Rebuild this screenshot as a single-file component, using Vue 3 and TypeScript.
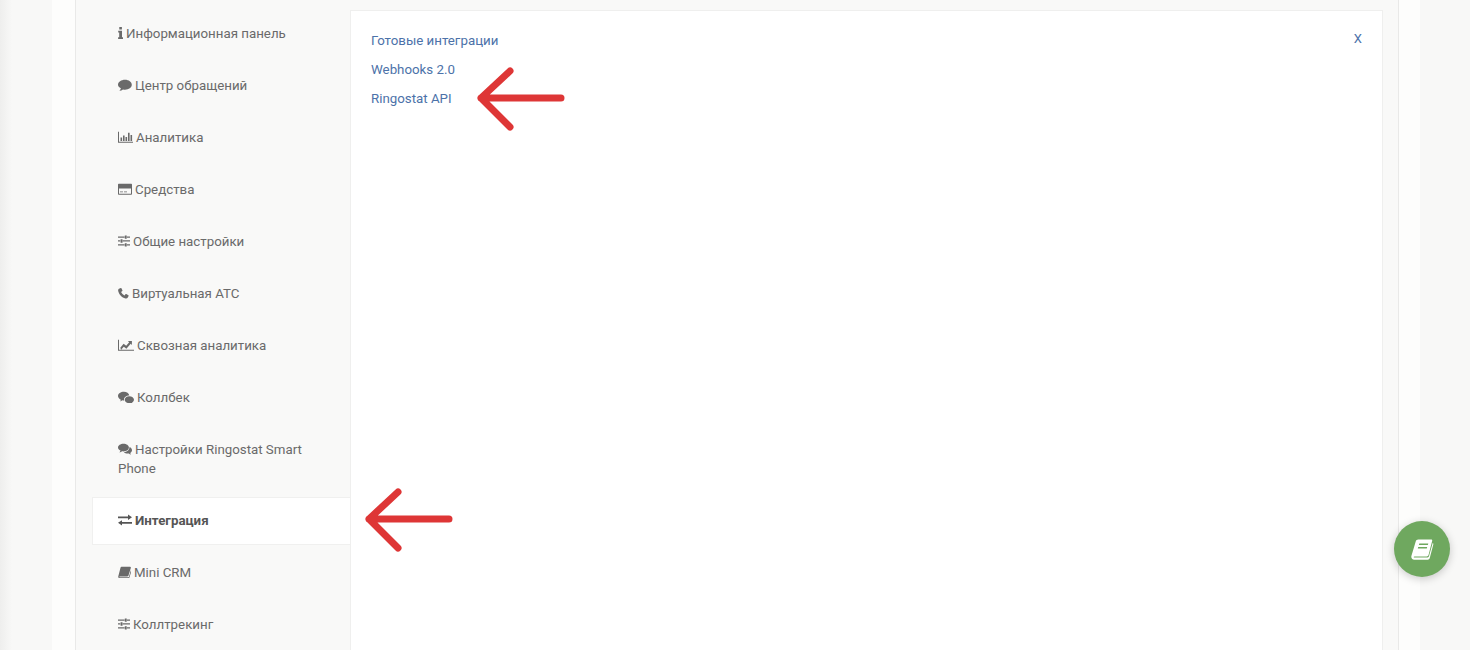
<template>
  <div class="page">
    <div class="edge"></div>
    <div class="wrap">
      <div class="panel">
        <ul class="menu">
          <li v-for="item in items" :key="item.label" class="menu-item" :class="{ active: item.active }">
            <svg class="ico" :style="{ width: item.w + 'px' }" :viewBox="`0 0 ${item.w} 12`" fill="currentColor" v-html="item.icon"></svg>{{ item.label }}
          </li>
        </ul>
        <div class="content">
          <div class="links">
            <a class="link">Готовые интеграции</a>
            <a class="link">Webhooks 2.0</a>
            <a class="link">Ringostat API</a>
          </div>
          <a class="close">X</a>
        </div>
      </div>
    </div>

    <svg class="arrow arrow-top" viewBox="0 0 92 64" fill="none">
      <path d="M88 31H8M37 4 8 31l29 29" />
    </svg>
    <svg class="arrow arrow-side" viewBox="0 0 92 64" fill="none">
      <path d="M88 31H8M37 4 8 31l29 29" />
    </svg>

    <button class="help" type="button">
      <svg viewBox="0 0 24 24" width="24" height="24" fill="#fff">
        <path d="M8.200 2.500h13c.8 0 1.200.6 1 1.300l-3.600 14c-.3 1-1 1.600-2 1.600H4.500c-.9 0-1.100.9-.4 1h13.600c.6 0 1-.3 1.200-.8L22.700 6c.5.2.8.7.6 1.400l-3.600 13.900c-.3.900-1 1.400-1.900 1.400H4.300C2.500 22.700 1 21 1.300 19.200L5.800 4.300c.3-1 1.300-1.800 2.400-1.800Z" />
        <path d="M9.300 6.500h9l-.4 1.500h-9ZM8.200 10h9l-.4 1.500h-9Z" fill="#6fa85f" />
      </svg>
    </button>
  </div>
</template>

<script setup lang="ts">
interface MenuItem {
  label: string
  icon: string
  w: number
  active?: boolean
}

const sliders =
  '<path d="M0 1.400h6.500v1.300H0zM9 1.400h3v1.300H9zM6.800.4h1.900v3.400H6.800zM0 5.300h2.200v1.300H0zM4.800 5.300H12v1.300H4.800zM2.600 4.300h1.900v3.400H2.600zM0 9.200h6.500v1.300H0zM9 9.200h3v1.300H9zM6.800 8.200h1.900v3.400H6.800z"/>'

const items: MenuItem[] = [
  {
    label: 'Информационная панель',
    w: 5,
    icon: '<path d="M1.300 0h2.600v2.400H1.300zM.2 3.800h3.800v6.500h1v1.700H.1v-1.700h1.100V5.500h-1z"/>',
  },
  {
    label: 'Центр обращений',
    w: 14,
    icon: '<path d="M7 .8c3.800 0 6.800 2.200 6.800 5S10.800 10.700 7 10.700c-.7 0-1.400 0-2-.2-1 .8-2.300 1.200-3.600 1.300.7-.7 1.300-1.600 1.500-2.500C1.100 8.400 0 7.200 0 5.800 0 3 3.200.8 7 .8Z"/>',
  },
  {
    label: 'Аналитика',
    w: 15,
    icon: '<path d="M0 .8h1v10h14v1H0zM2.500 6.500h1.600v3.500H2.500zM5 4.500h1.600V10H5zM7.500 6h1.600v4H7.500zM10 1.800h1.600V10H10zM12.500 4h1.600v6h-1.600z"/>',
  },
  {
    label: 'Средства',
    w: 14,
    icon: '<path fill-rule="evenodd" d="M1 .7h12c.6 0 1 .4 1 1v9c0 .6-.4 1-1 1H1c-.6 0-1-.4-1-1v-9c0-.6.4-1 1-1Zm0 4.700v5.300h12V5.400ZM2 8.500h3v.8H2Zm4 0h3v.8H6Z"/>',
  },
  { label: 'Общие настройки', w: 12, icon: sliders },
  {
    label: 'Виртуальная АТС',
    w: 11,
    icon: '<path d="M2.700 1 1 1.800C.3 2.200 0 3 .2 4c.8 3.700 3.700 6.700 7.300 7.500 1 .2 1.900-.2 2.300-1l.8-1.600c.1-.3 0-.5-.2-.7L8.300 7c-.3-.1-.5-.1-.7.1l-1 1.300C5 7.700 3.800 6.400 3.100 4.900l1.200-1c.2-.2.3-.5.1-.7L3.400 1.200C3.200 1 3 .9 2.700 1Z"/>',
  },
  {
    label: 'Сквозная аналитика',
    w: 16,
    icon: '<path d="M0 .8h1v10h15v1H0zM2.300 8.800l3.300-4 2.600 2 3-3.600-1.300-1.100h4v4l-1.200-1.300-4.300 5-2.600-2.100-2.700 3Z"/>',
  },
  {
    label: 'Коллбек',
    w: 16,
    icon: '<path d="M6 .8c2.700 0 5 1.600 5.300 3.600C8.300 4.400 6 6.200 6 8.500c0 .4 0 .7.200 1-.6 0-1.200 0-1.800-.2L2.300 10.500l.5-1.800C1.100 7.800 0 6.400 0 5 0 2.600 2.700.8 6 .8Zm5.300 4.400c2.600 0 4.700 1.600 4.700 3.500 0 1.100-.8 2.100-1.900 2.800l.4 1.400-1.600-.9c-.5.1-1 .2-1.600.2-2.600 0-4.600-1.600-4.600-3.500s2-3.500 4.600-3.500Z"/>',
  },
  {
    label: 'Настройки Ringostat Smart Phone',
    w: 14,
    icon: '<path d="M5.500.8c3 0 5.400 1.700 5.400 3.800S8.500 8.400 5.500 8.400c-.5 0-1 0-1.400-.1-.7.6-1.600 1-2.700 1.100.5-.5.9-1.100 1.100-1.800C1 7 0 5.900 0 4.600 0 2.500 2.500.8 5.500.8Zm6 3.300c1.500.6 2.500 1.800 2.500 3.100 0 1.100-.7 2-1.800 2.700.2.600.5 1.100.9 1.500-.9-.1-1.700-.5-2.300-1-.4.1-.8.1-1.200.1-1.500 0-2.900-.5-3.800-1.300 3-.1 5.800-2 5.700-5.100Z"/>',
  },
  {
    label: 'Интеграция',
    w: 14,
    active: true,
    icon: '<path d="M10 .6 14 3.300l-4 2.700V4.200H0V2.500h10ZM4 6.300v1.700h10v1.700H4v1.800L0 8.800Z"/>',
  },
  {
    label: 'Mini CRM',
    w: 13,
    icon: '<path d="M3.500.8H12c.7 0 1 .5.8 1.100l-2.300 7.600c-.2.7-.7 1.100-1.500 1.100H2c-.7 0-.9.6-.2.7h8.300c.4 0 .7-.2.8-.6l2.400-7.700c.4.200.6.6.4 1.100l-2.300 7.500c-.2.600-.7 1-1.300 1H2.300C1 12.600 0 11.500.3 10.300L2.500 1.700C2.700 1.200 3 .8 3.500.8Z"/>',
  },
  { label: 'Коллтрекинг', w: 12, icon: sliders },
]
</script>

<style scoped>
.page {
  position: relative;
  display: flex;
  height: 650px;
  overflow: hidden;
  background: #f8f8f7;
  font-family: Roboto, "Liberation Sans", sans-serif;
  font-size: 13.3px;
  line-height: 19px;
}

.edge {
  position: absolute;
  left: 0;
  top: 0;
  bottom: 0;
  width: 12px;
  background: linear-gradient(to right, #eeeeed, #f8f8f7);
}

.wrap {
  flex: 1;
  display: flex;
  margin: 0 50px 0 52px;
  padding: 0 21px 0 23px;
  background: #fdfdfc;
}

.panel {
  flex: 1;
  display: flex;
  align-items: stretch;
  border-left: 1px solid #e9e9e8;
  border-right: 1px solid #e9e9e8;
  background: #f9f9f8;
}

.menu {
  width: 274px;
  flex-shrink: 0;
  margin: 7px 0 0;
  padding: 0;
  list-style: none;
}

.menu-item {
  margin-left: 16px;
  padding: 16.5px 20px 16.5px 26px;
  color: #6a6a6a;
}

.menu-item.active {
  margin-top: 3px;
  margin-bottom: 1px;
  margin-right: -1px;
  padding-top: 12.5px;
  padding-bottom: 14.5px;
  background: #fff;
  border: 1px solid #f0f0ef;
  border-right: 0;
  padding-left: 25px;
  color: #555;
  font-weight: 700;
}

.ico {
  height: 12px;
  margin-right: 3px;
  vertical-align: -1px;
}

.content {
  flex: 1;
  display: flex;
  justify-content: space-between;
  margin: 10px 15px 0 0;
  padding: 20px 20px 0;
  background: #fff;
  border: 1px solid #efefee;
  border-bottom: 0;
}

.links {
  display: flex;
  flex-direction: column;
  gap: 10px;
}

.link {
  color: #4c72a9;
}

.close {
  margin-top: -2px;
  color: #4c72a9;
  font-size: 13px;
}

.arrow {
  position: absolute;
  width: 92px;
  height: 64px;
}

.arrow path {
  stroke: #de3636;
  stroke-width: 7;
  stroke-linecap: round;
  stroke-linejoin: round;
}

.arrow-top {
  left: 473px;
  top: 67px;
}

.arrow-side {
  left: 361px;
  top: 488px;
}

.help {
  position: absolute;
  left: 1394px;
  top: 521px;
  width: 56px;
  height: 56px;
  display: flex;
  align-items: center;
  justify-content: center;
  padding: 0;
  border: none;
  border-radius: 50%;
  background: #6fa85f;
  box-shadow: 0 2px 8px rgba(0, 0, 0, 0.2);
}
</style>
